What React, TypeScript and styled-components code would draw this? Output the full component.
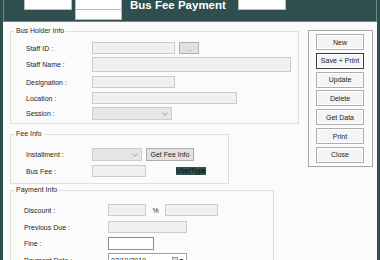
import * as React from 'react';
import styled, { createGlobalStyle } from 'styled-components';

const GlobalStyle = createGlobalStyle`
  html, body {
    margin: 0;
    padding: 0;
  }
  body {
    width: 380px;
    height: 260px;
    overflow: hidden;
    background: #2f4f4f;
    font-family: "Liberation Sans", Arial, sans-serif;
  }
`

const Frame = styled.div`
  width: 380px;
  height: 260px;
  box-sizing: border-box;
  padding: 0 3px;
  background: #2f4f4f;
  display: flex;
  flex-direction: column;
  overflow: hidden;
`
const Header = styled.div`
  height: 22px;
  flex-shrink: 0;
  box-sizing: border-box;
  border: 1px solid #6b8a8a;
  border-top: none;
  display: flex;
  align-items: flex-start;
  padding-left: 20px;
  overflow: hidden;
`
const HeaderBox = styled.div<{ $w: number; $ml?: number }>`
  width: ${p => p.$w}px;
  height: 10px;
  margin-left: ${p => p.$ml ?? 0}px;
  box-sizing: border-box;
  background: #fff;
  border: 1px solid #b9b9b9;
  border-top: none;
`
const HeaderStack = styled.div`
  display: flex;
  flex-direction: column;
  margin-left: 3px;
`
const Title = styled.div`
  margin-left: 8px;
  color: #fff;
  font-weight: bold;
  font-size: 11.5px;
  line-height: 11px;
  white-space: nowrap;
`

const Body = styled.div`
  flex: 1;
  background: #fbfbfb;
  display: flex;
  align-items: flex-start;
  padding: 5px 0 0 7px;
  overflow: hidden;
`
const Column = styled.div`
  display: flex;
  flex-direction: column;
  width: 289px;
  flex-shrink: 0;
`
const Group = styled.fieldset<{ $w: number; $mt?: number }>`
  width: ${p => p.$w}px;
  box-sizing: border-box;
  margin: ${p => p.$mt ?? 0}px 0 0 0;
  padding: 0;
  min-inline-size: 0;
  border: 1px solid #dedede;
`
const Legend = styled.legend`
  margin-left: 3px;
  padding: 0 2px;
  font-size: 7px;
  line-height: 8px;
  color: #2a2a2a;
`
const Content = styled.div<{ $pad: string }>`
  display: flex;
  flex-direction: column;
  padding: ${p => p.$pad};
`
const Row = styled.div<{ $h: number; $mt?: number }>`
  display: flex;
  align-items: center;
  height: ${p => p.$h}px;
  margin-top: ${p => p.$mt ?? 0}px;
`
const Label = styled.span<{ $w: number }>`
  width: ${p => p.$w}px;
  flex-shrink: 0;
  font-size: 7px;
  color: #1e1e1e;
  white-space: nowrap;
`
const TextBox = styled.div<{ $w: number; $enabled?: boolean }>`
  width: ${p => p.$w}px;
  height: 100%;
  box-sizing: border-box;
  background: ${p => (p.$enabled ? '#fff' : '#f0f0f0')};
  border: 1px solid ${p => (p.$enabled ? '#8c8c8c' : '#cbcbcb')};
`
const Combo = styled.div<{ $w: number }>`
  width: ${p => p.$w}px;
  height: 100%;
  box-sizing: border-box;
  background: #e6e6e6;
  border: 1px solid #cccccc;
  display: flex;
  align-items: center;
  justify-content: flex-end;
  padding-right: 3px;
`
const SmallButton = styled.div<{ $w: number; $ml?: number; $muted?: boolean }>`
  width: ${p => p.$w}px;
  height: 100%;
  margin-left: ${p => p.$ml ?? 0}px;
  box-sizing: border-box;
  background: #e1e1e1;
  border: 1px solid #adadad;
  display: flex;
  align-items: center;
  justify-content: center;
  font-size: 7px;
  color: ${p => (p.$muted ? '#8a8a8a' : '#1e1e1e')};
`
const UserType = styled.span`
  margin-left: 30px;
  width: 30px;
  height: 8px;
  background: #2f4f4f;
  color: #0c1616;
  font-size: 7px;
  line-height: 8px;
  overflow: hidden;
  white-space: nowrap;
`
const Percent = styled.span`
  width: 19px;
  text-align: center;
  font-size: 7px;
  color: #1e1e1e;
`
const DateBox = styled.div`
  width: 79px;
  height: 100%;
  box-sizing: border-box;
  background: #fff;
  border: 1px solid #a0a0a0;
  display: flex;
  align-items: center;
  justify-content: space-between;
  padding: 0 2px 0 2px;
  font-size: 7px;
  color: #1e1e1e;
`
const DropIcon = styled.span`
  display: flex;
  align-items: center;
  gap: 1px;
`

const Panel = styled.div`
  width: 65px;
  height: 137px;
  margin: 3px 0 0 9px;
  flex-shrink: 0;
  box-sizing: border-box;
  border: 1px solid #a3a3a3;
  box-shadow: inset 0 0 0 1px #fff;
  padding: 3px 0 3px 7px;
  display: flex;
  flex-direction: column;
  justify-content: space-between;
`
const ActionButton = styled.div<{ $focused?: boolean }>`
  width: 48px;
  height: 16px;
  box-sizing: border-box;
  background: #f4f4f4;
  border: 1px solid ${p => (p.$focused ? '#3a3a3a' : '#adadad')};
  box-shadow: inset 0 0 0 1px #fff;
  display: flex;
  align-items: center;
  justify-content: center;
  font-size: 7px;
  color: #222;
  white-space: nowrap;
`

const Chevron = () => (
  <svg width="6" height="4" viewBox="0 0 6 4">
    <polyline points="0.5,0.8 3,3.2 5.5,0.8" fill="none" stroke="#8a8a8a" strokeWidth="0.8" />
  </svg>
)

const CalendarDrop = () => (
  <DropIcon>
    <svg width="6" height="6" viewBox="0 0 6 6">
      <rect x="0.5" y="0.5" width="5" height="5" fill="#d8d8d8" stroke="#8a8a8a" strokeWidth="0.8" />
    </svg>
    <svg width="5" height="4" viewBox="0 0 5 4">
      <polygon points="0.5,1 4.5,1 2.5,3.5" fill="#333" />
    </svg>
  </DropIcon>
)

const actions = ['New', 'Save + Print', 'Update', 'Delete', 'Get Data', 'Print', 'Close']

export default function App() {
  return (
    <>
      <GlobalStyle />
      <Frame>
        <Header>
          <HeaderBox $w={48} />
          <HeaderStack>
            <HeaderBox $w={47} />
            <HeaderBox $w={47} />
          </HeaderStack>
          <Title>Bus Fee Payment</Title>
          <HeaderBox $w={48} $ml={12} />
        </Header>
        <Body>
          <Column>
            <Group $w={289}>
              <Legend>Bus Holder Info</Legend>
              <Content $pad="7px 0 3px 15px">
                <Row $h={12}>
                  <Label $w={66}>Staff ID :</Label>
                  <TextBox $w={83} />
                  <SmallButton $w={20} $ml={4} $muted>...</SmallButton>
                </Row>
                <Row $h={15} $mt={3}>
                  <Label $w={66}>Staff Name :</Label>
                  <TextBox $w={199} />
                </Row>
                <Row $h={12} $mt={4}>
                  <Label $w={66}>Designation :</Label>
                  <TextBox $w={83} />
                </Row>
                <Row $h={12} $mt={4}>
                  <Label $w={66}>Location :</Label>
                  <TextBox $w={145} />
                </Row>
                <Row $h={13} $mt={3}>
                  <Label $w={66}>Session :</Label>
                  <Combo $w={80}><Chevron /></Combo>
                </Row>
              </Content>
            </Group>
            <Group $w={219} $mt={6}>
              <Legend>Fee Info</Legend>
              <Content $pad="10px 0 6px 15px">
                <Row $h={13}>
                  <Label $w={66}>Installment :</Label>
                  <Combo $w={50}><Chevron /></Combo>
                  <SmallButton $w={48} $ml={4}>Get Fee Info</SmallButton>
                </Row>
                <Row $h={12} $mt={4}>
                  <Label $w={66}>Bus Fee :</Label>
                  <TextBox $w={54} />
                  <UserType>UserType</UserType>
                </Row>
              </Content>
            </Group>
            <Group $w={264} $mt={2}>
              <Legend>Payment Info</Legend>
              <Content $pad="10px 0 6px 13px">
                <Row $h={12}>
                  <Label $w={84}>Discount :</Label>
                  <TextBox $w={38} />
                  <Percent>%</Percent>
                  <TextBox $w={53} />
                </Row>
                <Row $h={12} $mt={5}>
                  <Label $w={84}>Previous Due :</Label>
                  <TextBox $w={79} />
                </Row>
                <Row $h={13} $mt={4}>
                  <Label $w={84}>Fine :</Label>
                  <TextBox $w={46} $enabled />
                </Row>
                <Row $h={14} $mt={3}>
                  <Label $w={84}>Payment Date :</Label>
                  <DateBox>
                    <span>02/10/2019</span>
                    <CalendarDrop />
                  </DateBox>
                </Row>
              </Content>
            </Group>
          </Column>
          <Panel>
            {actions.map(a => (
              <ActionButton key={a} $focused={a === 'Save + Print'}>{a}</ActionButton>
            ))}
          </Panel>
        </Body>
      </Frame>
    </>
  )
}
